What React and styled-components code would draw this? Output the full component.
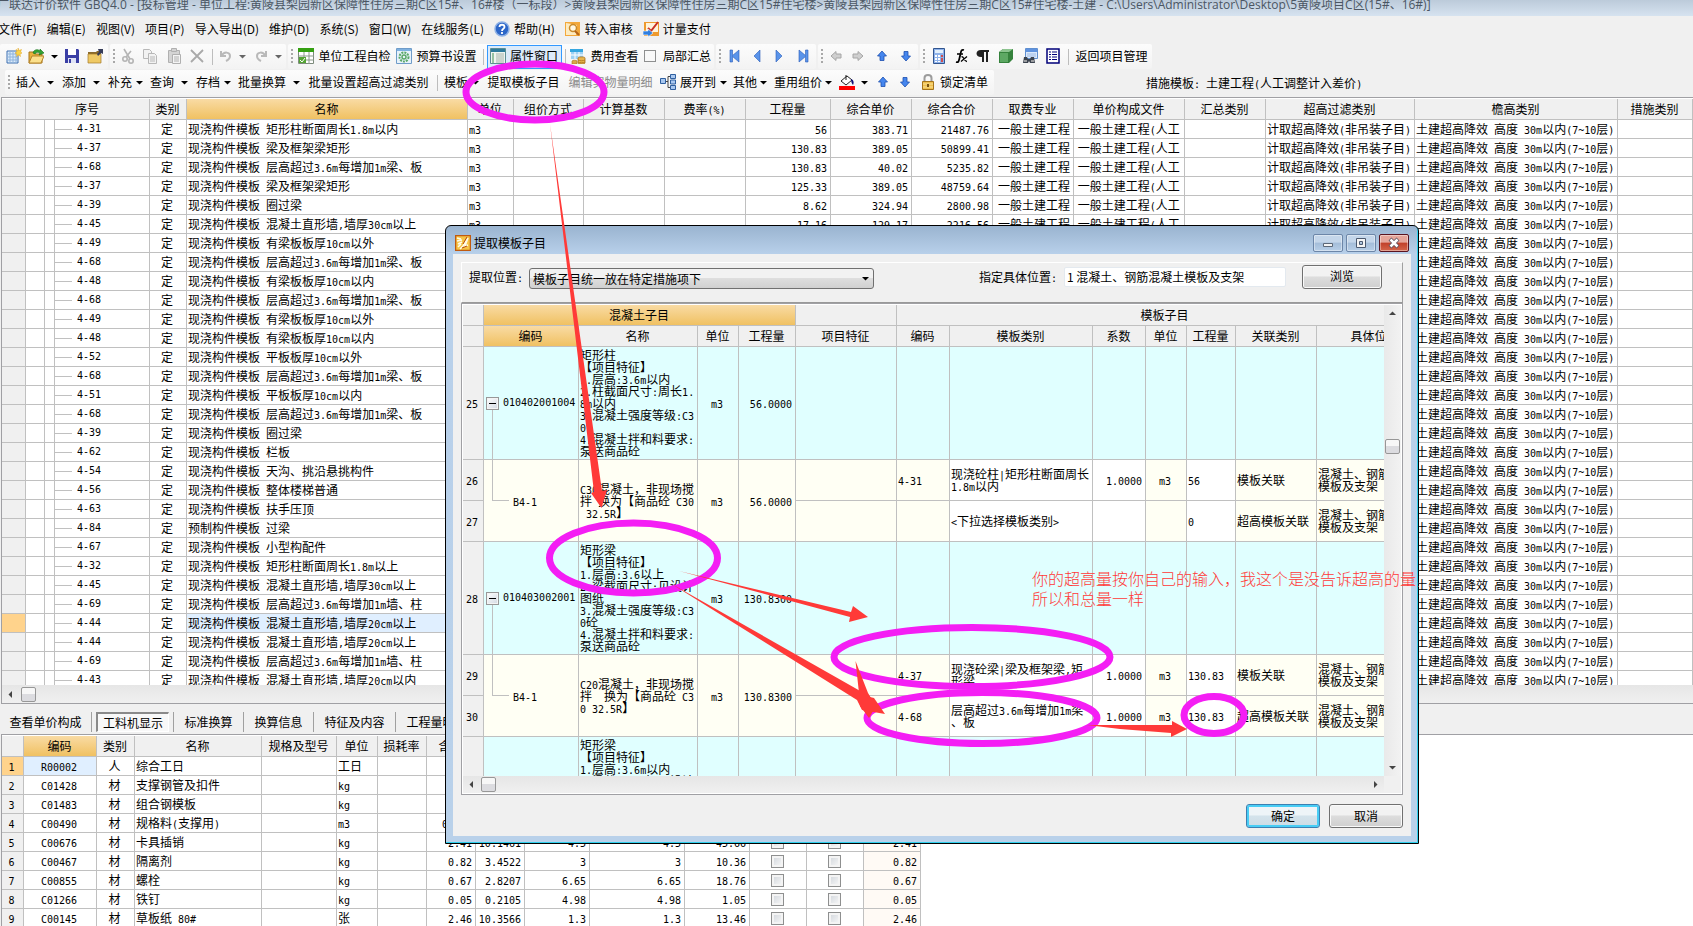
import React from "react";
import styled, { createGlobalStyle, css } from "styled-components";

const LINE = "#c0c0c0";
const FACE = "#f0f0f0";
const ORANGE = "linear-gradient(#f9dba4, #f0c162)";
const PINK = "#f41ef4";
const RED = "#ff3a38";

const GlobalStyle = createGlobalStyle`
  * { box-sizing: border-box; }
  body {
    margin: 0;
    overflow: hidden;
    background: ${FACE};
    color: #000;
    font: 12px/18px "Noto Sans CJK SC", sans-serif;
  }
  button, input, select { font: inherit; color: inherit; }
`;

/* ---------- text ---------- */

const Mono = styled.span`
  font: 10px/8px "DejaVu Sans Mono", monospace;
`;

// Latin runs take half the width of a Chinese character, as in the grid font
const Text = ({ children }) =>
  String(children)
    .split(/([\x20-\x7e]+)/)
    .map((part, i) => (i % 2 ? <Mono key={i}>{part}</Mono> : part));

/* ---------- icons ---------- */

const Svg = styled.svg`
  display: block;
  flex: none;
`;

const shapes = {
  create: (
    <>
      <path d="M1 3h11v12H1z" fill="#dcebfa" stroke="#3d6fb0" />
      <path d="M4 3v12M7 3v12M10 3v12M1 6h11M1 9h11M1 12h11" stroke="#8fb4dd" />
      <path d="M12 0l1 2.500 2.500-1-1 2.500 1.500 1-2 1 .5 2.500-2-1.500-2 1.500.5-2.500-2-1 2-1-1-2.500 2.500 1z" fill="#fbd449" stroke="#e3a720" strokeWidth=".5" />
    </>
  ),
  open: (
    <>
      <path d="M1 4h5l1 2h7v9H1z" fill="#e9b23c" stroke="#a8741a" />
      <path d="M4 8h12l-3 7H1z" fill="#fbe08c" stroke="#b5842a" />
      <path d="M5 5c1-4 5-4 7-2V1l4 4-5 2 1-2c-2-1-4-1-5 1z" fill="#34a234" stroke="#14731a" strokeWidth=".6" />
    </>
  ),
  save: (
    <>
      <path d="M1 1h13l1 1v13H1z" fill="#3a3fa5" />
      <path d="M4 1h8v6H4z" fill="#fff" />
      <path d="M4 10h8v5H4z" fill="#dfe3f5" />
      <path d="M5 11h2v4H5z" fill="#3a3fa5" />
    </>
  ),
  folder: (
    <>
      <path d="M1 4h8l1-1h4v12H1z" fill="#8a6a2c" />
      <path d="M1 6h13v9H1z" fill="#efc964" stroke="#a37a2a" strokeWidth=".7" />
      <path d="M11 1h5v5l-2-1-3 3-1-2 2-2z" fill="#363c58" />
    </>
  ),
  cut: (
    <g fill="none" stroke="#b4b4b4" strokeWidth="1.6">
      <path d="M4 1l6 10M11 3l-5 6" />
      <circle cx="5" cy="11" r="2.200" />
      <circle cx="11" cy="13" r="2.200" />
    </g>
  ),
  copy: (
    <g fill="#f2f2f2" stroke="#b8b8b8">
      <path d="M1.500 1.500h6l2 2v7h-8z" />
      <path d="M6.500 5.500h6l2 2v8h-8z" />
      <path d="M8 9h5M8 11h5M8 13h5" />
    </g>
  ),
  paste: (
    <g fill="#d4d4d4" stroke="#b0b0b0">
      <path d="M2.500 2.500h11v12h-11z" />
      <path d="M5.500.5h5v3h-5z" />
      <path d="M6.500 6.500h8v9h-8z" fill="#f4f4f4" />
      <path d="M8 9h5M8 11h5M8 13h5" />
    </g>
  ),
  remove: <path d="M2 2l12 12M14 2L2 14" stroke="#a9a9a9" strokeWidth="1.800" />,
  undo: <path d="M3 3v5h5M3.500 8C6 3 12 4 12 8c0 3-2 4-4 5" fill="none" stroke="#b9b9b9" strokeWidth="2" />,
  redo: <path d="M13 3v5H8M12.500 8C10 3 4 4 4 8c0 3 2 4 4 5" fill="none" stroke="#b9b9b9" strokeWidth="2" />,
  check: (
    <>
      <path d="M.5.5h15v15H.5z" fill="#fff" stroke="#7c8a7c" />
      <path d="M0 0h16v4H0z" fill="#35a012" />
      <path d="M0 8h16M0 12h16M6 4v12M11 4v12" stroke="#8b9a8b" />
      <path d="M1 9h7v6H1z" fill="#54a533" />
      <path d="M2 12l2 2 3-4" fill="none" stroke="#fff" />
    </>
  ),
  budget: (
    <>
      <path d="M.5.5h15v15H.5z" fill="#e7f2fb" stroke="#6f9cc9" />
      <path d="M1 1h14v2H1z" fill="#7fb1e0" />
      <circle cx="8" cy="9" r="4.500" fill="none" stroke="#5aa867" strokeWidth="2" strokeDasharray="2 1" />
      <circle cx="8" cy="9" r="2" fill="none" stroke="#5aa867" strokeWidth="1.500" />
    </>
  ),
  props: (
    <>
      <path d="M.5.5h15v15H.5z" fill="#eef5f0" stroke="#5c8f94" />
      <path d="M1 1h14v3H1z" fill="#2d7a9c" />
      <path d="M2 6h2M2 8h2M2 10h2M2 12h2M2 14h2" stroke="#3f8f52" />
      <path d="M6 6h8M6 8h8M6 10h8M6 12h8M6 14h8" stroke="#a6b4ab" />
    </>
  ),
  fees: (
    <>
      <path d="M1 1h12v10H1z" fill="#9fd2f4" />
      <path d="M0 1h13v3H0z" fill="#35a7e0" />
      <path d="M1 7h12M5 4v8M9 4v7" stroke="#fff" />
      <path d="M8 10c0-1.500 7-1.500 7 0v5c0 1.200-7 1.200-7 0z" fill="#e8b54c" stroke="#a8721c" strokeWidth=".8" />
      <path d="M8 12c2 1 5 1 7 0M8 14c2 1 5 1 7 0" fill="none" stroke="#a8721c" strokeWidth=".8" />
      <path d="M2 13c0-1 5-1 5 0v3H2z" fill="#d9a848" stroke="#a8721c" strokeWidth=".6" />
    </>
  ),
  first: <path d="M3 2h2.500v5.500L12 2v12L5.500 8.500V14H3z" fill="#5a94ea" stroke="#2a5cb8" strokeWidth=".6" />,
  prev: <path d="M11 2v12L5 8z" fill="#5a94ea" stroke="#2a5cb8" strokeWidth=".6" />,
  next: <path d="M5 2v12l6-6z" fill="#5a94ea" stroke="#2a5cb8" strokeWidth=".6" />,
  last: <path d="M13 2h-2.500v5.500L4 2v12l6.500-5.500V14H13z" fill="#5a94ea" stroke="#2a5cb8" strokeWidth=".6" />,
  left: <path d="M3 8l5-4.500V6h5v4H8v2.500z" fill="#cfcfcf" stroke="#a6a6a6" />,
  right: <path d="M13 8L8 3.500V6H3v4h5v2.500z" fill="#cfcfcf" stroke="#a6a6a6" />,
  up: <path d="M8 3l4.500 5H10v4.500H6V8H3.500z" fill="#4586ee" stroke="#1d4fae" strokeWidth=".8" />,
  down: <path d="M8 13l4.500-5H10V3.500H6V8H3.500z" fill="#4586ee" stroke="#1d4fae" strokeWidth=".8" />,
  calc: (
    <>
      <path d="M2.500.5h11v15h-11z" fill="#8eb2ea" stroke="#31558f" />
      <path d="M4 2h8v3H4z" fill="#e3f0fb" />
      <path d="M4 7h2v2H4zM7 7h2v2H7zM4 10h2v2H4zM7 10h2v2H7zM4 13h2v1H4zM7 13h2v1H7z" fill="#fff" />
      <path d="M10 7h2v2h-2zM10 10h2v4h-2z" fill="#cf4f4f" />
    </>
  ),
  fx: (
    <g fill="none" stroke="#000">
      <path d="M11 2C8 1 8 4 7 8s-1 7-4 6" strokeWidth="1.800" />
      <path d="M4 6h6M8.500 8.500c3 0 2 5 5.500 5M14 8.500l-6 5" strokeWidth="1.300" />
    </g>
  ),
  pilcrow: <path d="M6 9C0 9 0 2 6 2h8v2h-1v10h-2V4H9v10H7V9z" fill="#222" />,
  cube: (
    <>
      <path d="M1 4l4-3h10v10l-4 4H1z" fill="#35823c" />
      <path d="M1 4l4-3h10l-4 3z" fill="#8cc48f" />
      <path d="M2 5h8v9H2z" fill="#5da863" />
    </>
  ),
  find: (
    <>
      <path d="M3.500.5h12v10h-12z" fill="#dbe9fb" stroke="#5f8fd0" />
      <path d="M4 1h11v3H4z" fill="#5f93df" />
      <path d="M5 6h9M5 8h9" stroke="#9dbbe6" />
      <path d="M1 15l1-6h3l1 2h2l1-2h3l1 6H8l-1-2-1 2z" fill="#3c4450" />
      <path d="M2 13h3M9 13h3" stroke="#bbb" strokeWidth="1.500" />
    </>
  ),
  list: (
    <>
      <path d="M2 1h12v14H2z" fill="#fff" stroke="#00007a" strokeWidth="1.500" />
      <path d="M4 4h2M4 6.500h2M4 9h2M4 11.500h2M7 4h5M7 6.500h5M7 9h5M7 11.500h5" stroke="#00007a" />
    </>
  ),
  help: (
    <>
      <circle cx="8" cy="8" r="7" fill="#2c66c8" stroke="#8fb2e6" strokeWidth="1.500" />
      <path d="M5.500 6c0-3 5-3 5 0 0 2-2.500 1.500-2.500 4M8 11v2" fill="none" stroke="#fff" strokeWidth="1.800" />
    </>
  ),
  audit: (
    <>
      <path d="M0 1h15v14H0z" fill="#f3a83b" />
      <path d="M1 2l11 2-1 10H1z" fill="#fdebc0" />
      <circle cx="8" cy="7" r="3.500" fill="#fff8e4" stroke="#c98a2a" strokeWidth="1.500" />
      <path d="M10 10l4 4" stroke="#b4641a" strokeWidth="2" />
    </>
  ),
  pay: (
    <>
      <path d="M1 1h15v14H1z" fill="#ee9a2e" />
      <path d="M3 2h12v9H3z" fill="#fff4dc" />
      <path d="M5 7l3 3 7-9" fill="none" stroke="#c83024" strokeWidth="2" />
      <path d="M0 10h5V8l5 4-5 4v-2H0z" fill="#2f7fe0" stroke="#fff" strokeWidth=".6" />
    </>
  ),
  expand: (
    <>
      <path d="M5 7.500h3M8 2.500v11M8 2.500h3M8 13.500h3" stroke="#444" fill="none" />
      <path d="M.5 4.500h5v5h-5zM10.500.5h5v4h-5zM10.500 6h5v4h-5zM10.500 11.500h5v4h-5z" fill="#a9c8f0" stroke="#2f5f9f" />
    </>
  ),
  bucket: (
    <>
      <path d="M2 7l6-5 5 4-6 5z" fill="#fff" stroke="#222" />
      <path d="M7 1v5" stroke="#222" />
      <path d="M12 5c3 1 3 4 2 6-1-1-2-3-2-6z" fill="#11117a" />
      <path d="M0 12h16v4H0z" fill="#f00" />
    </>
  ),
  lock: (
    <>
      <path d="M4.500 7V4c0-4 7-4 7 0v3" fill="none" stroke="#9c9c9c" strokeWidth="2" />
      <path d="M2.500 7.500h11v8h-11z" fill="#efc04d" stroke="#a5741b" />
      <path d="M3 10h10M3 13h10" stroke="#fbe29a" />
      <path d="M7 10h2v3H7z" fill="#7a5410" />
    </>
  ),
  app: (
    <>
      <path d="M.5.5h15v15H.5z" fill="#f6c445" stroke="#c05a10" strokeWidth="1.500" />
      <path d="M2 3l4 1M2 6l5-1M3 9l4-2M3 12l3-3M5 14l3-3 5-8-3 8 3-1" fill="none" stroke="#fffbe8" strokeWidth="1.500" />
      <path d="M12 2l-4 7M7 13l5-2" stroke="#b5480c" />
    </>
  ),
};

const Icon = ({ name, size = 16 }) => (
  <Svg width={size} height={size} viewBox="0 0 16 16" aria-hidden="true">
    {shapes[name]}
  </Svg>
);

const Caret = ({ dir = "down", color = "#000" }) => {
  const turn = { down: 0, left: 90, up: 180, right: 270 }[dir];
  return (
    <Svg width="7" height="7" viewBox="0 0 7 7" aria-hidden="true">
      <path d="M0 2h7L3.500 5.500z" fill={color} transform={`rotate(${turn} 3.500 3.500)`} />
    </Svg>
  );
};

/* ---------- shell and bars ---------- */

const Shell = styled.div`
  position: relative;
  display: flex;
  flex-direction: column;
  height: 100vh;
  overflow: hidden;
`;

const TitleBar = styled.header`
  flex: none;
  height: 16px;
  overflow: hidden;
  background: linear-gradient(#bccbda, #d6e3f0);
  color: #4b5663;
  font-family: "Open Sans", "Noto Sans CJK SC", sans-serif;
  line-height: 10px;
  text-indent: -3px;
  white-space: nowrap;
`;

const MenuBar = styled.nav`
  flex: none;
  display: flex;
  align-items: center;
  gap: 10px;
  height: 28px;
  margin-left: -2px;
  padding-bottom: 2px;
`;

const MenuItem = styled.button`
  display: flex;
  align-items: center;
  gap: 4px;
  padding: 0;
  border: 0;
  background: none;
  white-space: nowrap;
`;

const ToolRow = styled.div`
  flex: none;
  display: flex;
  gap: 2px;
  height: ${(p) => (p.$second ? 27 : 26)}px;
  padding-left: ${(p) => (p.$second ? 5 : 0)}px;
`;

const ToolGroup = styled.div`
  display: flex;
  align-items: center;
  height: 25px;
  padding-left: ${(p) => (p.$open ? 4 : 0)}px;
  border-radius: 2px;
  background: linear-gradient(#fcfcfc, #f3f3f3);
`;

const Grip = styled.span`
  width: 8px;
  height: 16px;
  background: repeating-linear-gradient(#a8a8a8 0 2px, transparent 2px 4px) 3px 0 / 2px 100% no-repeat;
`;

const Divider = styled.span`
  width: ${(p) => p.$w || 8}px;
  height: 16px;
  background: linear-gradient(#bdbdbd, #bdbdbd) center / 1px 100% no-repeat;
`;

const Tool = styled.button`
  display: flex;
  align-items: center;
  justify-content: ${(p) => (p.$start ? "flex-start" : "center")};
  gap: ${(p) => p.$gap || 4}px;
  width: ${(p) => p.$w}px;
  height: 24px;
  padding: ${(p) => (p.$start ? "0 0 1px 3px" : "0 1px 1px 0")};
  border: 0;
  background: none;
  white-space: nowrap;
  color: ${(p) => (p.disabled ? "#8c8c8c" : "#000")};
  ${(p) =>
    p.$active &&
    css`
      border: 1px solid #3399ff;
      background: #dcebfa;
    `}
`;

const ToolCheck = styled.label`
  display: flex;
  align-items: center;
  justify-content: center;
  gap: 7px;
  width: 73px;
  padding-bottom: 1px;
  input {
    appearance: none;
    width: 12px;
    height: 12px;
    margin: 0;
    border: 1px solid #8e8f8f;
    background: #f8f8f8;
  }
`;

const TemplateNote = styled.div`
  align-self: center;
  margin-left: 150px;
  padding-bottom: 1px;
  white-space: pre;
`;

const menus = ["文件(F)", "编辑(E)", "视图(V)", "项目(P)", "导入导出(D)", "维护(D)", "系统(S)", "窗口(W)", "在线服务(L)"];

const IconTool = ({ icon, label, w, disabled }) => (
  <Tool $w={w} aria-label={label} disabled={disabled}>
    {icon === "caret" ? <Caret color={disabled ? "#666" : "#000"} /> : <Icon name={icon} />}
  </Tool>
);

const DropTool = ({ label, w, gap }) => (
  <Tool $w={w} $gap={gap} $start>
    {label}
    <Caret />
  </Tool>
);

const Toolbars = () => (
  <>
    <MenuBar>
      {menus.map((m) => (
        <MenuItem key={m}>{m}</MenuItem>
      ))}
      <MenuItem><Icon name="help" />帮助(H)</MenuItem>
      <MenuItem><Icon name="audit" />转入审核</MenuItem>
      <MenuItem><Icon name="pay" />计量支付</MenuItem>
    </MenuBar>
    <ToolRow>
      <ToolGroup $open>
        <IconTool icon="create" label="新建" w={20} />
        <IconTool icon="open" label="打开" w={24} />
        <IconTool icon="caret" label="最近文件" w={14} />
        <IconTool icon="save" label="保存" w={20} />
        <IconTool icon="folder" label="关闭" w={26} />
      </ToolGroup>
      <ToolGroup>
        <Grip />
        <IconTool icon="cut" label="剪切" w={20} disabled />
        <IconTool icon="copy" label="复制" w={25} disabled />
        <IconTool icon="paste" label="粘贴" w={23} disabled />
        <IconTool icon="remove" label="删除" w={22} disabled />
        <Divider />
        <IconTool icon="undo" label="撤销" w={20} disabled />
        <IconTool icon="caret" label="撤销列表" w={14} disabled />
        <IconTool icon="redo" label="恢复" w={22} disabled />
        <IconTool icon="caret" label="恢复列表" w={14} disabled />
      </ToolGroup>
      <ToolGroup>
        <Grip />
        <Tool $w={98}><Icon name="check" />单位工程自检</Tool>
        <Tool $w={86}><Icon name="budget" />预算书设置</Tool>
        <Divider $w={7} />
        <Tool $w={75} $active><Icon name="props" />属性窗口</Tool>
        <Divider $w={7} />
        <Tool $w={72}><Icon name="fees" />费用查看</Tool>
        <ToolCheck><input type="checkbox" />局部汇总</ToolCheck>
      </ToolGroup>
      <ToolGroup>
        <Grip />
        <IconTool icon="first" label="首行" w={22} />
        <IconTool icon="prev" label="上一行" w={22} />
        <IconTool icon="next" label="下一行" w={23} />
        <IconTool icon="last" label="末行" w={25} />
      </ToolGroup>
      <ToolGroup>
        <Grip />
        <IconTool icon="left" label="升级" w={20} disabled />
        <IconTool icon="right" label="降级" w={24} disabled />
        <IconTool icon="up" label="上移" w={25} />
        <IconTool icon="down" label="下移" w={23} />
      </ToolGroup>
      <ToolGroup>
        <Grip />
        <IconTool icon="calc" label="计算器" w={22} />
        <IconTool icon="fx" label="函数" w={22} />
        <IconTool icon="pilcrow" label="特殊符号" w={23} />
        <IconTool icon="cube" label="图元公式" w={23} />
        <IconTool icon="find" label="查找" w={24} />
        <IconTool icon="list" label="列设置" w={22} />
        <Divider />
        <Tool $w={80}>返回项目管理</Tool>
      </ToolGroup>
    </ToolRow>
    <ToolRow $second>
      <ToolGroup>
        <Grip />
        <DropTool label="插入" w={46} gap={7} />
        <DropTool label="添加" w={46} gap={7} />
        <DropTool label="补充" w={42} />
        <DropTool label="查询" w={46} gap={7} />
        <DropTool label="存档" w={42} />
        <DropTool label="批量换算" w={70} gap={7} />
        <Tool $w={128}>批量设置超高过滤类别</Tool>
        <Divider />
        <DropTool label="模板" w={42} />
        <Tool $w={82}>提取模板子目</Tool>
        <Tool $w={92} disabled>编辑实物量明细</Tool>
        <Tool $w={73} $start><Icon name="expand" />展开到<Caret /></Tool>
        <DropTool label="其他" w={41} gap={3} />
        <DropTool label="重用组价" w={65} gap={3} />
        <Tool $w={36} $gap={6} $start aria-label="填充颜色"><Icon name="bucket" /><Caret /></Tool>
        <IconTool icon="up" label="上移" w={22} />
        <IconTool icon="down" label="下移" w={23} />
        <Tool $w={77} $start><Icon name="lock" />锁定清单</Tool>
      </ToolGroup>
      <TemplateNote><Text>措施模板: 土建工程(人工调整计入差价)</Text></TemplateNote>
    </ToolRow>
  </>
);

/* ---------- grids ---------- */

const Pane = styled.section`
  flex: ${(p) => (p.$h ? `0 0 ${p.$h}px` : "1 1 0")};
  min-height: 0;
  display: flex;
  flex-direction: column;
  margin-left: 1px;
  padding-top: 1px;
  border: 1px solid #a0a0a4;
  border-width: ${(p) => (p.$h ? "1px 0 0 1px" : "1px 0 1px 1px")};
  background: #fff;
`;

const Viewport = styled.div`
  flex: 1;
  min-height: 0;
  min-width: 0;
  overflow: hidden;
`;

const Grid = styled.table`
  table-layout: fixed;
  border-collapse: separate;
  border-spacing: 0;
  width: ${(p) => p.$w || "100%"};
`;

const Th = styled.th`
  height: 21px;
  padding: 0 1px 0 0;
  overflow: hidden;
  border: solid ${LINE};
  border-width: 0 1px 1px 0;
  background: ${(p) => (p.$on ? ORANGE : FACE)};
  font-weight: normal;
  white-space: nowrap;
`;

const Td = styled.td`
  height: ${(p) => p.$h || 19}px;
  padding: 0 3px 0 1px;
  overflow: hidden;
  border: solid ${LINE};
  border-width: 0 1px 1px 0;
  background: ${(p) => p.$bg || "#fff"};
  line-height: ${(p) => (p.$h ? 12 : 18)}px;
  text-align: ${(p) => p.$align || "left"};
  white-space: pre;
`;

const TreeCell = styled.div`
  display: flex;
  align-items: center;
  height: 18px;
  margin-left: -1px;
`;

const Indent = styled.span`
  width: ${(p) => p.$w}px;
  height: 18px;
  border-right: 1px solid ${LINE};
`;

const Dash = styled.span`
  width: 17px;
  height: 1px;
  margin-right: 5px;
  background: ${LINE};
`;

const HScroll = styled.div`
  flex: none;
  display: flex;
  align-items: center;
  gap: ${(p) => p.$gap}px;
  height: ${(p) => p.$h}px;
  padding: 0 5px;
  background: linear-gradient(#e6e6e6, #f0f0f0);
  > :nth-child(3) { margin-left: auto; }
`;

const Thumb = styled.span`
  flex: none;
  width: 15px;
  height: 15px;
  border: 1px solid #979797;
  border-radius: 2px;
  background: linear-gradient(#f7f7f7 50%, #dcdce0 50%);
`;

const Cols = ({ widths }) => (
  <colgroup>
    {widths.map((w, i) => (
      <col key={i} style={w ? { width: w } : undefined} />
    ))}
  </colgroup>
);

const mainWidths = [24, 124, 37, 281, 46, 70, 81, 81, 85, 81, 81, 81, 111, 81, 149, 203, 0];
const mainHeads = ["", "序号", "类别", "名称", "单位", "组价方式", "计算基数", "费率(%)", "工程量", "综合单价", "综合合价", "取费专业", "单价构成文件", "汇总类别", "超高过滤类别", "檐高类别", "措施类别"];

const cast = "现浇构件模板 ";
const extraBeam = cast + "层高超过3.6m每增加1m梁、板";
const extraWall = cast + "层高超过3.6m每增加1m墙、柱";
const mainRows = [
  ["4-31", cast + "矩形柱断面周长1.8m以内", "56", "383.71", "21487.76"],
  ["4-37", cast + "梁及框架梁矩形", "130.83", "389.05", "50899.41"],
  ["4-68", extraBeam, "130.83", "40.02", "5235.82"],
  ["4-37", cast + "梁及框架梁矩形", "125.33", "389.05", "48759.64"],
  ["4-39", cast + "圈过梁", "8.62", "324.94", "2800.98"],
  ["4-45", cast + "混凝土直形墙,墙厚30cm以上", "17.16", "129.17", "2216.56"],
  ["4-49", cast + "有梁板板厚10cm以外"],
  ["4-68", extraBeam],
  ["4-48", cast + "有梁板板厚10cm以内"],
  ["4-68", extraBeam],
  ["4-49", cast + "有梁板板厚10cm以外"],
  ["4-48", cast + "有梁板板厚10cm以内"],
  ["4-52", cast + "平板板厚10cm以外"],
  ["4-68", extraBeam],
  ["4-51", cast + "平板板厚10cm以内"],
  ["4-68", extraBeam],
  ["4-39", cast + "圈过梁"],
  ["4-62", cast + "栏板"],
  ["4-54", cast + "天沟、挑沿悬挑构件"],
  ["4-56", cast + "整体楼梯普通"],
  ["4-63", cast + "扶手压顶"],
  ["4-84", "预制构件模板 过梁"],
  ["4-67", cast + "小型构配件"],
  ["4-32", cast + "矩形柱断面周长1.8m以上"],
  ["4-45", cast + "混凝土直形墙,墙厚30cm以上"],
  ["4-69", extraWall],
  ["4-44", cast + "混凝土直形墙,墙厚20cm以上"],
  ["4-44", cast + "混凝土直形墙,墙厚20cm以上"],
  ["4-69", extraWall],
  ["4-43", cast + "混凝土直形墙,墙厚20cm以内"],
];
const CURRENT = 26;

const MainGrid = () => (
  <Pane>
    <Viewport>
      <Grid>
        <Cols widths={mainWidths} />
        <thead>
          <tr>
            {mainHeads.map((h, i) => (
              <Th key={i} $on={h === "名称"}><Text>{h}</Text></Th>
            ))}
          </tr>
        </thead>
        <tbody>
          {mainRows.map(([code, name, qty = "", price = "", total = ""], i) => (
            <tr key={i}>
              <Td $bg={i === CURRENT ? "#ffd38c" : FACE} />
              <Td>
                <TreeCell>
                  <Indent $w={19} />
                  <Indent $w={10} />
                  <Dash />
                  <Text>{code}</Text>
                </TreeCell>
              </Td>
              <Td $align="center">定</Td>
              <Td $bg={i === CURRENT ? "#e0efff" : undefined}><Text>{name}</Text></Td>
              <Td><Text>m3</Text></Td>
              <Td />
              <Td />
              <Td />
              <Td $align="right"><Text>{qty}</Text></Td>
              <Td $align="right"><Text>{price}</Text></Td>
              <Td $align="right"><Text>{total}</Text></Td>
              <Td $align="right">一般土建工程</Td>
              <Td> <Text>一般土建工程(人工</Text></Td>
              <Td />
              <Td><Text>计取超高降效(非吊装子目)</Text></Td>
              <Td><Text>土建超高降效 高度 30m以内(7~10层)</Text></Td>
              <Td />
            </tr>
          ))}
        </tbody>
      </Grid>
    </Viewport>
    <HScroll $h={18} $gap={7}>
      <Caret dir="left" color="#444" />
      <Thumb />
    </HScroll>
  </Pane>
);

const TabBar = styled.div`
  flex: none;
  display: flex;
  height: 30px;
  padding: 8px 0 2px;
`;

const TabSlot = styled.div`
  display: flex;
  justify-content: center;
  width: ${(p) => p.$w}px;
  border-right: 1px solid #a0a0a0;
`;

const Tab = styled.button`
  padding: 0 5px;
  border: 1px solid transparent;
  background: none;
  white-space: nowrap;
  line-height: 18px;
  ${(p) =>
    p.$on &&
    css`
      border: 1px solid #fff;
      border-top: 2px solid #8a8a8a;
      border-left: 2px solid #8a8a8a;
      background: #f8f8f8;
    `}
`;

const tabs = [["查看单价构成", 92], ["工料机显示", 82], ["标准换算", 70], ["换算信息", 70], ["特征及内容", 82], ["工程量明细", 82]];

const CellCheck = styled.input`
  appearance: none;
  display: block;
  width: 13px;
  height: 13px;
  margin: 0 auto;
  border: 1px solid #8e8f8f;
  background: linear-gradient(135deg, #cfd4da, #fafafa);
  box-shadow: inset 0 0 0 2px #f4f4f4;
`;

const resWidths = [22, 73, 38, 127, 75, 41, 49, 49, 49, 65, 95, 65, 57, 57, 57];
const resHeads = ["", "编码", "类别", "名称", "规格及型号", "单位", "损耗率", "含量", "数量", "定额价", "市场价", "合价", "暂估", "锁定", "原始含量"];
const resRows = [
  ["R00002", "人", "综合工日", "工日"],
  ["C01428", "材", "支撑钢管及扣件", "kg"],
  ["C01483", "材", "组合钢模板", "kg"],
  ["C00490", "材", "规格料(支撑用)", "m3", "0.003"],
  ["C00676", "材", "卡具插销", "kg", "2.41", "10.1461", "4.5", "45.66"],
  ["C00467", "材", "隔离剂", "kg", "0.82", "3.4522", "3", "10.36"],
  ["C00855", "材", "螺栓", "kg", "0.67", "2.8207", "6.65", "18.76"],
  ["C01266", "材", "铁钉", "kg", "0.05", "0.2105", "4.98", "1.05"],
  ["C00145", "材", "草板纸 80#", "张", "2.46", "10.3566", "1.3", "13.46"],
];

const ResourceGrid = () => (
  <Pane $h={192}>
    <Viewport>
      <Grid $w="919px">
        <Cols widths={resWidths} />
        <thead>
          <tr>
            {resHeads.map((h, i) => (
              <Th key={i} $on={i === 1}>{h}</Th>
            ))}
          </tr>
        </thead>
        <tbody>
          {resRows.map(([code, kind, name, unit, use = "", qty = "", price = "", total = ""], i) => (
            <tr key={code}>
              <Td $align="center" $bg={i ? FACE : "#ffd38c"}><Text>{i + 1}</Text></Td>
              <Td $align="center" $bg={i ? undefined : "#e0efff"}><Text>{code}</Text></Td>
              <Td $align="center">{kind}</Td>
              <Td><Text>{name}</Text></Td>
              <Td />
              <Td><Text>{unit}</Text></Td>
              <Td />
              <Td $align="right"><Text>{use}</Text></Td>
              <Td $align="right"><Text>{qty}</Text></Td>
              <Td $align="right"><Text>{price}</Text></Td>
              <Td $align="right"><Text>{price}</Text></Td>
              <Td $align="right"><Text>{total}</Text></Td>
              <Td><CellCheck type="checkbox" aria-label={`暂估 ${name}`} /></Td>
              <Td><CellCheck type="checkbox" aria-label={`锁定 ${name}`} /></Td>
              <Td $align="right" $bg="#fffaf5"><Text>{use}</Text></Td>
            </tr>
          ))}
        </tbody>
      </Grid>
    </Viewport>
  </Pane>
);

/* ---------- dialog ---------- */

const Window = styled.div`
  position: absolute;
  left: 445px;
  top: 225px;
  display: flex;
  flex-direction: column;
  width: 974px;
  height: 619px;
  padding: 0 7px 7px;
  border: 1px solid #000;
  border-radius: 6px 6px 0 0;
  background: linear-gradient(#9ab4d0, #b8d0ea 28px, #b9d1ea);
  box-shadow: inset -1px -1px 0 #2fd0ee;
`;

const WindowTitle = styled.div`
  display: flex;
  align-items: center;
  gap: 3px;
  height: 28px;
  padding: 6px 2px 0;
  h2 {
    flex: 1;
    margin: 0;
    font-size: 12px;
    font-weight: normal;
  }
`;

const CaptionButton = styled.button`
  display: flex;
  align-items: center;
  justify-content: center;
  width: 30px;
  height: 18px;
  padding: 0;
  border: 1px solid ${(p) => (p.$close ? "#5a1420" : "#6c86a8")};
  border-radius: 2px;
  background: ${(p) => (p.$close ? "linear-gradient(#e5a59a 45%, #c1402a 50%, #d4664c)" : "linear-gradient(#c4d6ea 45%, #a4bdd9 50%, #b8cfe8)")};
  box-shadow: inset 0 0 0 1px rgba(255, 255, 255, 0.4);
`;

const Client = styled.div`
  flex: 1;
  min-height: 0;
  display: flex;
  flex-direction: column;
  padding: 8px;
  background: ${FACE};
`;

const Options = styled.div`
  flex: none;
  display: flex;
  align-items: center;
  height: 41px;
  padding: 0 20px 12px 7px;
  border: 1px solid #fff;
  border-right-color: #a0a0a0;
  border-bottom-color: #999;
  label {
    white-space: pre;
  }
`;

const SelectBox = styled.div`
  display: grid;
  align-items: center;
  width: 345px;
  margin: 4px auto 0 6px;
  select {
    grid-area: 1 / 1;
    appearance: none;
    width: 100%;
    height: 21px;
    padding: 0 3px;
    border: 1px solid #707070;
    border-radius: 3px;
    background: linear-gradient(#f2f2f2 45%, #dedede 50%, #d0d0d0);
    line-height: 18px;
  }
  svg {
    grid-area: 1 / 1;
    justify-self: end;
    margin-right: 5px;
    pointer-events: none;
  }
`;

const PathInput = styled.input`
  width: 222px;
  height: 20px;
  margin: 0 16px 0 7px;
  padding: 0 2px;
  border: 1px solid #e3e9ef;
  border-radius: 2px;
  background: #fff;
`;

const PushButton = styled.button`
  width: ${(p) => p.$w}px;
  height: 24px;
  padding: 0 0 1px;
  border: 1px solid #707070;
  border-radius: 3px;
  background: linear-gradient(#f2f2f2 45%, #dddddd 50%, #cfcfcf);
  box-shadow: inset 0 0 0 1px #fafafa;
  ${(p) =>
    p.$main &&
    css`
      border-color: #3c7fb1;
      background: linear-gradient(#eef4f8 45%, #d4e3ec 50%, #cddbe4);
      box-shadow: inset 0 0 0 2px #48cdf5;
    `}
`;

const GridBox = styled.div`
  flex: 1;
  min-height: 0;
  display: grid;
  grid-template-columns: minmax(0, 1fr) 17px;
  grid-template-rows: minmax(0, 1fr) 17px;
  padding: 1px;
  border: 1px solid #a0a0a4;
  background: #fff;
`;

const VScroll = styled.div`
  display: flex;
  flex-direction: column;
  align-items: center;
  padding: 5px 0;
  background: linear-gradient(90deg, #e9e9e9, #f2f2f2);
  ${Thumb} {
    margin: 122px 0 auto;
  }
`;

const Corner = styled.div`
  background: ${FACE};
`;

const Footer = styled.div`
  display: flex;
  justify-content: flex-end;
  gap: 9px;
  padding-top: 9px;
`;

const NodeCell = styled(Td)`
  padding-left: 2px;
  background-image: linear-gradient(${LINE}, ${LINE});
  background-repeat: no-repeat;
  background-position: 8px 100%;
  background-size: 1px 50%;
`;

const LeafCell = styled(Td)`
  padding-left: 29px;
  background-image: linear-gradient(${LINE}, ${LINE}), linear-gradient(${LINE}, ${LINE});
  background-repeat: no-repeat;
  background-position: 8px 0, 8px 50%;
  background-size: 1px 50%, 17px 1px;
`;

const Node = styled.div`
  display: flex;
  align-items: center;
  gap: 4px;
`;

const Toggle = styled.button`
  flex: none;
  width: 13px;
  height: 13px;
  padding: 0;
  border: 1px solid #989898;
  background:
    linear-gradient(#000, #000) center / 7px 1px no-repeat,
    linear-gradient(135deg, #fff, #d2d9e2);
  box-shadow: inset 0 0 0 1px #f4f4f4;
`;

const AQUA = "#e0ffff";
const CREAM = "#fffff4";

const pickWidths = [21, 95, 119, 41, 57, 101, 53, 143, 53, 41, 49, 81, 117];
const pickHeads = ["编码", "名称", "单位", "工程量", "项目特征", "编码", "模板类别", "系数", "单位", "工程量", "关联类别", "具体位置"];

const features = (title, ...lines) => [title, "【项目特征】", ...lines].join("\n");

const groups = [
  {
    no: 25,
    code: "010402001004",
    name: features("矩形柱", "1.层高:3.6m以内", "2.柱截面尺寸:周长1.", "8m以内", "3.混凝土强度等级:C3", "0", "4.混凝土拌和料要求:", "泵送商品砼"),
    qty: "56.0000",
    child: "C30混凝土，非现场搅\n拌 换为【商品砼 C30\n 32.5R】",
    items: [
      ["4-31", "现浇砼柱|矩形柱断面周长\n1.8m以内", "1.0000", "m3", "56", "模板关联"],
      ["", "<下拉选择模板类别>", "", "", "0", "超高模板关联"],
    ],
  },
  {
    no: 28,
    code: "010403002001",
    name: features("矩形梁", "1.层高:3.6以上", "2.梁截面尺寸:见设计", "图纸", "3.混凝土强度等级:C3", "0砼", "4.混凝土拌和料要求:", "泵送商品砼"),
    qty: "130.8300",
    child: "C20混凝土，非现场搅\n拌  换为【商品砼 C3\n0 32.5R】",
    items: [
      ["4-37", "现浇砼梁|梁及框架梁,矩\n形梁", "1.0000", "m3", "130.83", "模板关联"],
      ["4-68", "层高超过3.6m每增加1m梁\n、板", "1.0000", "m3", "130.83", "超高模板关联"],
    ],
  },
  {
    no: 31,
    code: "010403002002",
    name: features("矩形梁", "1.层高:3.6m以内", "2.梁截面尺寸:见设计", "图纸", "3.混凝土强度等级:C3", "0砼", "4.混凝土拌和料要求:", "泵送商品砼"),
    qty: "125.3300",
    items: [],
  },
];

const ParentRow = ({ group }) => (
  <tr>
    <Td $h={113} $bg={FACE} $align="center"><Text>{group.no}</Text></Td>
    <NodeCell $h={113} $bg={AQUA}>
      <Node>
        <Toggle aria-label="折叠" />
        <Text>{group.code}</Text>
      </Node>
    </NodeCell>
    <Td $h={113} $bg={AQUA}><Text>{group.name}</Text></Td>
    <Td $h={113} $bg={AQUA} $align="center"><Text>m3</Text></Td>
    <Td $h={113} $bg={AQUA} $align="right"><Text>{group.qty}</Text></Td>
    {pickWidths.slice(5).map((w, i) => (
      <Td key={i} $h={113} $bg={AQUA} />
    ))}
  </tr>
);

const ItemRow = ({ group, item, index }) => {
  const [code, kind, factor, unit, qty, link] = item;
  return (
    <tr>
      <Td $h={41} $bg={FACE} $align="center"><Text>{group.no + index + 1}</Text></Td>
      {index === 0 && (
        <>
          <LeafCell rowSpan={2} $h={82} $bg={CREAM}><Text>B4-1</Text></LeafCell>
          <Td rowSpan={2} $h={82} $bg={CREAM}><Text>{group.child}</Text></Td>
          <Td rowSpan={2} $h={82} $bg={CREAM} $align="center"><Text>m3</Text></Td>
          <Td rowSpan={2} $h={82} $bg={CREAM} $align="right"><Text>{group.qty}</Text></Td>
        </>
      )}
      <Td $h={41} $bg={CREAM} />
      <Td $h={41} $bg={CREAM}><Text>{code}</Text></Td>
      <Td $h={41}><Text>{kind}</Text></Td>
      <Td $h={41} $align="right"><Text>{factor}</Text></Td>
      <Td $h={41} $bg={CREAM} $align="center"><Text>{unit}</Text></Td>
      <Td $h={41}><Text>{qty}</Text></Td>
      <Td $h={41} $bg={CREAM}>{link}</Td>
      <Td $h={41} $bg={CREAM}>{"混凝土、钢筋混凝土\n模板及支架"}</Td>
    </tr>
  );
};

const PickDialog = () => (
  <Window role="dialog" aria-labelledby="pick-title">
    <WindowTitle>
      <Icon name="app" />
      <h2 id="pick-title">提取模板子目</h2>
      <CaptionButton aria-label="最小化">
        <Svg width="12" height="12"><path d="M1.500 6.500h9v3h-9z" fill="#f4f4f4" stroke="#5c6878" /></Svg>
      </CaptionButton>
      <CaptionButton aria-label="最大化">
        <Svg width="12" height="12"><path d="M1.500 1.500h9v9h-9zM4.500 4.500h3v3h-3z" fill="#f4f4f4" fillRule="evenodd" stroke="#4c5a70" /></Svg>
      </CaptionButton>
      <CaptionButton $close aria-label="关闭">
        <Svg width="12" height="12">
          <path d="M2 2l8 8M10 2l-8 8" stroke="#5c5260" strokeWidth="4" />
          <path d="M2.500 2.500l7 7M9.500 2.500l-7 7" stroke="#fff" strokeWidth="2.500" />
        </Svg>
      </CaptionButton>
    </WindowTitle>
    <Client>
      <Options>
        <label htmlFor="place"><Text>提取位置:</Text></label>
        <SelectBox>
          <select id="place">
            <option>模板子目统一放在特定措施项下</option>
          </select>
          <Caret />
        </SelectBox>
        <label htmlFor="target"><Text>指定具体位置:</Text></label>
        <PathInput id="target" defaultValue="1 混凝土、钢筋混凝土模板及支架" />
        <PushButton $w={80}>浏览</PushButton>
      </Options>
      <GridBox>
        <Viewport>
          <Grid $w="971px">
            <Cols widths={pickWidths} />
            <thead>
              <tr>
                <Th />
                <Th colSpan={4} $on>混凝土子目</Th>
                <Th />
                <Th colSpan={7}>模板子目</Th>
              </tr>
              <tr>
                <Th />
                {pickHeads.map((h, i) => (
                  <Th key={i} $on={i === 0}>{h}</Th>
                ))}
              </tr>
            </thead>
            <tbody>
              {groups.map((group) => (
                <React.Fragment key={group.no}>
                  <ParentRow group={group} />
                  {group.items.map((item, i) => (
                    <ItemRow key={i} group={group} item={item} index={i} />
                  ))}
                </React.Fragment>
              ))}
            </tbody>
          </Grid>
        </Viewport>
        <VScroll>
          <Caret dir="up" color="#444" />
          <Thumb />
          <Caret color="#444" />
        </VScroll>
        <HScroll $h={17} $gap={6}>
          <Caret dir="left" color="#444" />
          <Thumb />
          <Caret dir="right" color="#444" />
        </HScroll>
        <Corner />
      </GridBox>
      <Footer>
        <PushButton $w={74} $main>确定</PushButton>
        <PushButton $w={74}>取消</PushButton>
      </Footer>
    </Client>
  </Window>
);

/* ---------- hand-drawn marks over the windows ---------- */

const MarkLayer = styled.svg`
  position: absolute;
  left: 0;
  top: 0;
  pointer-events: none;
`;

const Remark = styled.p`
  position: absolute;
  left: 1032px;
  top: 568px;
  width: 387px;
  margin: 0;
  overflow: hidden;
  color: ${RED};
  font-size: 16px;
  font-weight: 300;
  line-height: 20px;
  white-space: pre;
`;

const rings = [
  [535, 92, 69, 28],
  [633.5, 558, 84, 35],
  [972, 657, 138, 29.5],
  [982, 718, 115, 25.5],
  [1214, 715, 30, 18.5],
];

const arrows = [
  "550,124 594,492 591,493 601.5,508 607,490 602,491",
  "679,571 851,612 853,606 868,617 849,622 850,617",
  "670,583 862,692 866,696 874,698 885,714 862,710 857,700",
  "855.5,661 868,693 876,706 869,718 860,706 859,693",
  "1087,725 1172,725 1172,721 1187,729 1171,737 1171,733 1120,729",
];

const Marks = () => (
  <>
    <MarkLayer width="1260" height="760" viewBox="0 0 1260 760" aria-hidden="true">
      {rings.map(([cx, cy, rx, ry]) => (
        <ellipse key={cy} cx={cx} cy={cy} rx={rx} ry={ry} fill="none" stroke={PINK} strokeWidth="7" />
      ))}
      {arrows.map((points) => (
        <polygon key={points} points={points} fill={RED} />
      ))}
    </MarkLayer>
    <Remark>{"你的超高量按你自己的输入，我这个是没告诉超高的量，\n所以和总量一样"}</Remark>
  </>
);

export default function App() {
  return (
    <Shell>
      <GlobalStyle />
      <TitleBar>
        广联达计价软件 GBQ4.0 - [投标管理 - 单位工程:黄陵县梨园新区保障性住房三期C区15#、16#楼（一标段）&gt;黄陵县梨园新区保障性住房三期C区15#住宅楼&gt;黄陵县梨园新区保障性住房三期C区15#住宅楼-土建 - C:\Users\Administrator\Desktop\5黄陵项目C区(15#、16#)]
      </TitleBar>
      <Toolbars />
      <MainGrid />
      <TabBar>
        {tabs.map(([label, w]) => (
          <TabSlot key={label} $w={w}>
            <Tab $on={label === "工料机显示"}>{label}</Tab>
          </TabSlot>
        ))}
      </TabBar>
      <ResourceGrid />
      <PickDialog />
      <Marks />
    </Shell>
  );
}
